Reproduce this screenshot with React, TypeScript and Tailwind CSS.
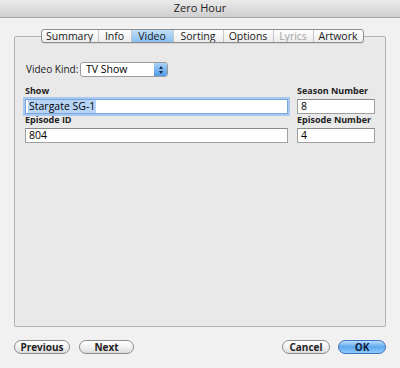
import React from 'react'

const tabs = ['Summary', 'Info', 'Video', 'Sorting', 'Options', 'Lyrics', 'Artwork']
const tabWidths: Record<string, string> = {
    Summary: 'w-[56px]',
    Info: 'w-[33px]',
    Video: 'w-[42px]',
    Sorting: 'w-[50px]',
    Options: 'w-[50px]',
    Lyrics: 'w-[40px]',
    Artwork: 'w-[50px]',
}

function Field({ label, value, width, focused }: { label: string; value: string; width: string; focused?: boolean }) {
    return (
        <div className={`flex flex-col ${width}`}>
            <div className="h-[12px] whitespace-nowrap text-[9px] font-bold leading-[12px] text-[#222]">{label}</div>
            <div
                className={
                    focused
                        ? 'mt-[2px] flex h-[15px] items-center border border-[#7aa6e0] bg-white px-[2px] shadow-[0_0_0_2px_#a9c8ef]'
                        : 'mt-[2px] flex h-[15px] items-center border border-[#a0a0a0] border-t-[#8a8a8a] bg-white px-[3px]'
                }
            >
                <span className={focused ? 'bg-[#b7d4f6] px-[1px] text-[10.5px] leading-[13px]' : 'text-[10.5px] leading-[13px]'}>{value}</span>
            </div>
        </div>
    )
}

function Button({ label, primary, width }: { label: string; primary?: boolean; width: string }) {
    return (
        <div
            className={
                primary
                    ? `flex h-[14px] ${width} items-center justify-center rounded-full border border-[#3d72bf] bg-gradient-to-b from-[#b9dcfb] via-[#5ea8ef] to-[#8fcaf8] text-[10px] font-bold text-[#0b1f40]`
                    : `flex h-[14px] ${width} items-center justify-center rounded-full border border-[#8c8c8c] bg-gradient-to-b from-white via-[#f2f2f2] to-[#dcdcdc] text-[10px] font-bold text-[#222]`
            }
        >
            {label}
        </div>
    )
}

export default function App() {
    return (
        <div className="flex h-[368px] w-[400px] flex-col bg-[#f1f1f1] font-['Open_Sans',sans-serif] text-black">
            <div className="flex h-[18px] items-center justify-center border-b border-[#a8a8a8] bg-gradient-to-b from-[#ebebeb] to-[#cfcfcf] text-[11px] text-[#222]">
                Zero Hour
            </div>

            <div className="flex flex-1 flex-col px-[14px] pt-[11px]">
                <div className="relative z-10 flex justify-center">
                    <div className="ml-[4px] flex h-[14px] overflow-hidden rounded-[3px] border border-[#8d8d8d] bg-gradient-to-b from-white to-[#ececec] shadow-[0_1px_0_#d5d5d5]">
                        {tabs.map((t, i) => (
                            <div
                                key={t}
                                className={[
                                    'flex items-center justify-center text-[10.5px] leading-none',
                                    tabWidths[t],
                                    i > 0 ? 'border-l border-[#c6c6c6]' : '',
                                    t === 'Video' ? 'bg-gradient-to-b from-[#c3e0fb] to-[#86bff0] text-[#0c1c33]' : '',
                                    t === 'Lyrics' ? 'text-[#a5a5a5]' : 'text-[#1a1a1a]',
                                ].join(' ')}
                            >
                                {t}
                            </div>
                        ))}
                    </div>
                </div>

                <div className="-mt-[7px] flex h-[291px] flex-col rounded-[2px] border border-[#b3b3b3] bg-[#e9e9e9] pl-[10px] pr-[10px] pt-[25px]">
                    <div className="flex items-center">
                        <span className="w-[55px] whitespace-nowrap pl-[1px] text-[10px] text-[#1a1a1a]">Video Kind:</span>
                        <div className="flex h-[15px] w-[88px] overflow-hidden rounded-[3px] border border-[#9b9b9b] bg-white">
                            <span className="flex-1 pl-[5px] text-[10.5px] leading-[13px]">TV Show</span>
                            <div className="flex w-[13px] flex-col items-center justify-center gap-[2px] bg-gradient-to-b from-[#a9d2f8] to-[#4d9ae8]">
                                <div className="h-0 w-0 border-x-[2.5px] border-b-[3px] border-x-transparent border-b-[#1b2b44]" />
                                <div className="h-0 w-0 border-x-[2.5px] border-t-[3px] border-x-transparent border-t-[#1b2b44]" />
                            </div>
                        </div>
                    </div>

                    <div className="mt-[8px] flex gap-[9px]">
                        <Field label="Show" value="Stargate SG-1" width="w-[263px]" focused />
                        <Field label="Season Number" value="8" width="w-[78px]" />
                    </div>
                    <div className="flex gap-[9px]">
                        <Field label="Episode ID" value="804" width="w-[263px]" />
                        <Field label="Episode Number" value="4" width="w-[78px]" />
                    </div>
                </div>

                <div className="mt-[13px] flex items-center">
                    <Button label="Previous" width="w-[56px]" />
                    <div className="ml-[9px]">
                        <Button label="Next" width="w-[55px]" />
                    </div>
                    <div className="ml-auto flex gap-[8px]">
                        <Button label="Cancel" width="w-[48px]" />
                        <Button label="OK" width="w-[48px]" primary />
                    </div>
                </div>
            </div>
        </div>
    )
}
